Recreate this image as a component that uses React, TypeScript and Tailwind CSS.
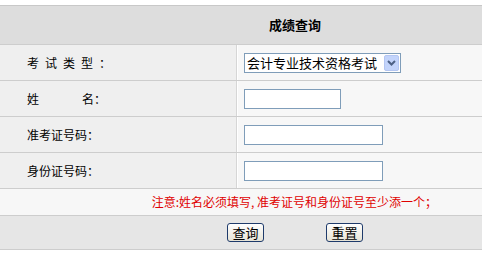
import React from 'react';

const font = { fontFamily: '"Noto Sans CJK SC", "Liberation Sans", sans-serif' };

const XpButton: React.FC<{ label: string }> = ({ label }) => (
  <button
    type="button"
    className="w-[37px] h-[19px] flex items-center justify-center rounded-[3px] border border-[#1f3b6b] bg-gradient-to-b from-white to-[#e6e3d6] text-[13px] leading-none text-black"
  >
    {label}
  </button>
);

const Row: React.FC<{ label: React.ReactNode; children: React.ReactNode }> = ({ label, children }) => (
  <div className="flex h-[36px] border-b border-[#cdcdcd]">
    <div className="w-[237px] flex items-center pl-[27px] bg-[#efefef] border-r border-[#d6d6d6] text-[12px] text-black">
      {label}
    </div>
    <div className="grow flex items-center pl-[6px] bg-[#f7f7f7] border-l border-white">{children}</div>
  </div>
);

const TextInput: React.FC<{ width: string }> = ({ width }) => (
  <input type="text" className={`${width} h-[20px] border border-[#7f9db9] bg-white outline-none`} />
);

export default function App() {
  return (
    <div className="w-[482px] h-[258px] bg-white overflow-hidden" style={font}>
      <div className="h-[5px]" />
      <div className="border-t border-[#c8c8c8]">
        <div className="h-[39px] bg-[#dddddd] flex items-center pl-[269px] border-b border-[#cdcdcd]">
          <span className="text-[13px] font-bold text-black">成绩查询</span>
        </div>

        <Row label={<><span className="tracking-[6px]">考试类型</span><span>：</span></>}>
          <div className="w-[157px] h-[20px] border border-[#7f9db9] bg-white flex items-center justify-between pl-[2px] pr-px">
            <span className="text-[13px] leading-none text-black whitespace-nowrap">会计专业技术资格考试</span>
            <span className="w-[15px] h-[16px] rounded-[2px] bg-[#c3d4fb] border border-[#b4c6f2] flex items-center justify-center">
              <svg width="9" height="6" viewBox="0 0 9 6">
                <path d="M1 1 L4.5 4.5 L8 1" fill="none" stroke="#4d6185" strokeWidth="2" />
              </svg>
            </span>
          </div>
        </Row>

        <Row label={<><span className="w-[55px]">姓</span><span>名：</span></>}>
          <TextInput width="w-[97px]" />
        </Row>

        <Row label="准考证号码：">
          <TextInput width="w-[139px]" />
        </Row>

        <Row label="身份证号码：">
          <TextInput width="w-[139px]" />
        </Row>

        <div className="h-[27px] bg-[#f7f7f7] border-b border-[#cdcdcd] flex items-center justify-end pr-[45px]">
          <span className="text-[12px] text-[#e00000] whitespace-nowrap">注意:姓名必须填写, 准考证号和身份证号至少添一个；</span>
        </div>

        <div className="h-[34px] bg-[#e6e6e6] border-b border-[#cdcdcd] flex items-center pl-[227px] gap-[62px]">
          <XpButton label="查询" />
          <XpButton label="重置" />
        </div>
      </div>
    </div>
  );
}
